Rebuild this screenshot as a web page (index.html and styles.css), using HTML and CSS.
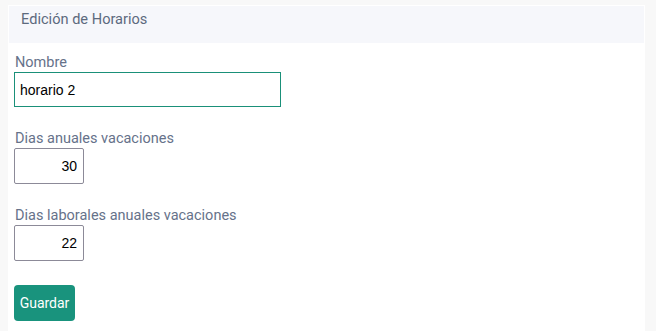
FILE: index.html
```html
<!DOCTYPE html>
<html lang="es">
<head>
    <meta charset="UTF-8">
    <meta name="viewport" content="width=device-width, initial-scale=1.0">
    <title>Edición de Horarios</title>
    <link rel="stylesheet" href="styles.css">
</head>
<body>
    <div class="card">
        <div class="card-header">Edición de Horarios</div>
        <form class="card-body">
            <div class="field">
                <label for="nombre">Nombre</label>
                <input type="text" id="nombre" class="input-text" value="horario 2">
            </div>
            <div class="field">
                <label for="anuales">Dias anuales vacaciones</label>
                <input type="text" id="anuales" class="input-num" value="30">
            </div>
            <div class="field">
                <label for="laborales">Dias laborales anuales vacaciones</label>
                <input type="text" id="laborales" class="input-num" value="22">
            </div>
            <button type="button" class="btn-save">Guardar</button>
        </form>
    </div>
</body>
</html>
```

FILE: styles.css
```css
body {
    margin: 0;
    padding: 5px 11px 0 8px;
    background: #f8f8f8;
    font-family: Roboto, 'Noto Sans', sans-serif;
}

.card {
    background: #fff;
    border: 1px solid #fff;
    min-height: 340px;
}

.card-header {
    background: #f6f7fb;
    color: #5d6a7e;
    font-size: 14.6px;
    height: 37px;
    line-height: 27px;
    padding: 0 12px;
}

.card-body {
    display: flex;
    flex-direction: column;
    align-items: flex-start;
    padding: 11px 5px 0;
}

.field {
    display: flex;
    flex-direction: column;
    align-items: flex-start;
    margin-bottom: 23px;
}

label {
    color: #66728a;
    font-size: 14.5px;
    line-height: 18px;
    padding-left: 1px;
}

input {
    box-sizing: border-box;
    font-family: 'Liberation Sans', Arial, sans-serif;
    font-size: 14px;
    color: #000;
    background: #fff;
    outline: none;
}

.input-text {
    width: 267px;
    height: 35px;
    padding: 0 5px;
    border: 1px solid #1a9079;
}

.input-num {
    width: 70px;
    height: 36px;
    padding: 0 6px;
    text-align: right;
    border: 1px solid #8c8a98;
    border-radius: 2px;
}

.btn-save {
    background: #19937d;
    color: #fff;
    border: none;
    border-radius: 4px;
    height: 36px;
    width: 61px;
    padding: 0;
    font-family: Roboto, 'Noto Sans', sans-serif;
    font-size: 14px;
    margin-top: 1px;
}
```
